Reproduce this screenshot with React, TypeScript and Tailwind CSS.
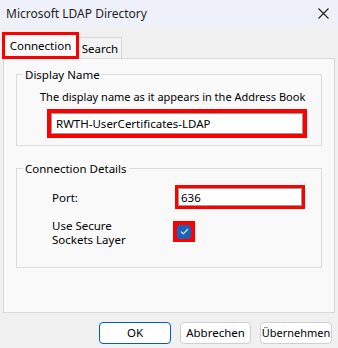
function RedBox({ className = "", children }: { className?: string; children: React.ReactNode }) {
  return <div className={`border-[3px] border-[#ff0000] ${className}`}>{children}</div>;
}

export default function App() {
  return (
    <div
      className="flex h-[348px] w-[338px] flex-col bg-[#f0f0f0] text-[11px] text-[#000]"
      style={{ fontFamily: '"Noto Sans", "Segoe UI", sans-serif' }}
    >
      {/* title bar */}
      <div className="flex h-[27px] shrink-0 items-center justify-between bg-[#eef1f9] pl-[6px] pr-[9px]">
        <span className="text-[12px] text-[#1f1f1f]">Microsoft LDAP Directory</span>
        <svg width="11" height="11" viewBox="0 0 11 11" className="stroke-[#1f1f1f]">
          <path d="M0.5 0.5 L10.5 10.5 M10.5 0.5 L0.5 10.5" strokeWidth="1.1" fill="none" />
        </svg>
      </div>

      {/* tabs */}
      <div className="mt-[5px] flex shrink-0 items-end pl-[2px]">
        <RedBox className="relative z-10 -mb-px h-[27px] w-[77px]">
          <div className="flex h-full items-center justify-center bg-[#f9f9f9] text-[11.5px]">Connection</div>
        </RedBox>
        <div className="flex h-[21px] w-[43px] items-center justify-center border-r border-t border-[#d9d9d9] bg-[#f3f3f3] pt-[2px] text-[11.5px]">
          Search
        </div>
      </div>

      {/* panel */}
      <div className="mx-[3px] flex h-[255px] shrink-0 flex-col border border-[#d9d9d9] bg-[#f9f9f9] px-[12px] pt-[7px]">
        <fieldset className="h-[80px] border border-[#dcdcdc]">
          <legend className="ml-[6px] px-[2px] text-[11.5px]">Display Name</legend>
          <div className="mt-[6px] whitespace-nowrap pl-[23px] text-[11px]">
            The display name as it appears in the Address Book
          </div>
          <RedBox className="ml-[30px] mt-[3px] h-[29px] w-[260px] border-[4px]">
            <div className="flex h-full items-center border border-[#9a9a9a] bg-white pl-[4px] text-[11.5px]">
              RWTH-UserCertificates-LDAP
            </div>
          </RedBox>
        </fieldset>

        <fieldset className="mt-[14px] h-[108px] border border-[#dcdcdc]">
          <legend className="ml-[6px] px-[2px] text-[11.5px]">Connection Details</legend>
          <div className="mt-[8px] flex items-center">
            <span className="w-[158px] pl-[35px] text-[11.5px]">Port:</span>
            <RedBox className="h-[24px] w-[130px]">
              <div className="flex h-full items-center border border-[#9a9a9a] bg-white pl-[2px] text-[11.5px]">636</div>
            </RedBox>
          </div>
          <div className="mt-[10px] flex items-start">
            <div className="flex w-[156px] flex-col pl-[35px] text-[11.5px] leading-[14px]">
              <span>Use Secure</span>
              <span>Sockets Layer</span>
            </div>
            <div className="mt-[2px] flex h-[21px] w-[22px] items-center justify-center bg-[#ff0000]">
              <div className="flex h-[14px] w-[14px] items-center justify-center rounded-[3px] bg-[#1565c0]">
                <svg width="9" height="7" viewBox="0 0 9 7" fill="none">
                  <path d="M1 3.6 L3.3 5.8 L8 1" stroke="#ffffff" strokeWidth="1.1" />
                </svg>
              </div>
            </div>
          </div>
        </fieldset>
      </div>

      {/* buttons */}
      <div className="mt-[9px] flex justify-end gap-[9px] pr-[6px]">
        <button className="h-[22px] w-[72px] rounded-[4px] border border-[#005fb8] bg-white text-[11.5px]">OK</button>
        <button className="h-[22px] w-[71px] rounded-[4px] border border-[#d0d0d0] bg-white text-[11.5px]">Abbrechen</button>
        <button className="h-[22px] w-[72px] rounded-[4px] border border-[#d0d0d0] bg-white text-[11px]">Übernehmen</button>
      </div>
    </div>
  );
}
